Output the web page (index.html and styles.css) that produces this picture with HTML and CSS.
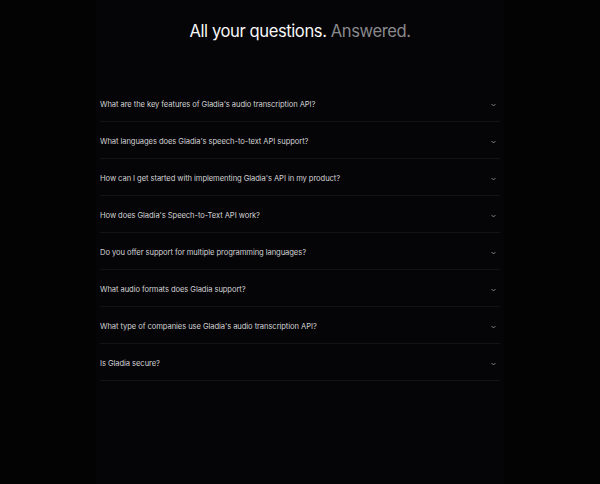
FILE: index.html
```html
<!DOCTYPE html>
<html lang="en">
<head>
    <meta charset="UTF-8">
    <meta name="viewport" content="width=device-width, initial-scale=1.0">
    <title>FAQ - Gladia</title>
    <link rel="stylesheet" href="styles.css">
</head>
<body>
    <main class="faq-section">
        <h2 class="faq-title">All your questions. <span class="muted">Answered.</span></h2>

        <ul class="faq-list">
            <li class="faq-item">
                <span class="question">What are the key features of Gladia's audio transcription API?</span>
                <svg class="chevron" viewBox="0 0 8 5"><path d="M1 1l3 3 3-3"/></svg>
            </li>
            <li class="faq-item">
                <span class="question">What languages does Gladia's speech-to-text API support?</span>
                <svg class="chevron" viewBox="0 0 8 5"><path d="M1 1l3 3 3-3"/></svg>
            </li>
            <li class="faq-item">
                <span class="question">How can I get started with implementing Gladia's API in my product?</span>
                <svg class="chevron" viewBox="0 0 8 5"><path d="M1 1l3 3 3-3"/></svg>
            </li>
            <li class="faq-item">
                <span class="question">How does Gladia's Speech-to-Text API work?</span>
                <svg class="chevron" viewBox="0 0 8 5"><path d="M1 1l3 3 3-3"/></svg>
            </li>
            <li class="faq-item">
                <span class="question">Do you offer support for multiple programming languages?</span>
                <svg class="chevron" viewBox="0 0 8 5"><path d="M1 1l3 3 3-3"/></svg>
            </li>
            <li class="faq-item">
                <span class="question">What audio formats does Gladia support?</span>
                <svg class="chevron" viewBox="0 0 8 5"><path d="M1 1l3 3 3-3"/></svg>
            </li>
            <li class="faq-item">
                <span class="question">What type of companies use Gladia's audio transcription API?</span>
                <svg class="chevron" viewBox="0 0 8 5"><path d="M1 1l3 3 3-3"/></svg>
            </li>
            <li class="faq-item">
                <span class="question">Is Gladia secure?</span>
                <svg class="chevron" viewBox="0 0 8 5"><path d="M1 1l3 3 3-3"/></svg>
            </li>
        </ul>
    </main>
</body>
</html>
```

FILE: styles.css
```css
* {
    margin: 0;
    padding: 0;
    box-sizing: border-box;
}

body {
    font-family: Inter, "Noto Sans", sans-serif;
    background: #030303;
    min-height: 100vh;
    color: #fff;
}

.faq-section {
    width: 408px;
    min-height: 484px;
    margin: 0 auto;
    padding: 21px 4px 0;
    background: #050407;
}

.faq-title {
    text-align: center;
    font-size: 16.6px;
    font-weight: 400;
    line-height: 21px;
    letter-spacing: -0.025em;
    color: #f6f6f6;
    margin: 0 -100px 43px;
}

.faq-title .muted {
    color: #89898b;
}

.faq-list {
    list-style: none;
}

.faq-item {
    height: 37px;
    display: flex;
    align-items: center;
    justify-content: space-between;
    padding-top: 3px;
    border-bottom: 1px solid #131215;
}

.question {
    font-size: 7.6px;
    color: #d2d2d4;
    letter-spacing: -0.01em;
}

.chevron {
    width: 5px;
    height: 4px;
    margin-right: 4px;
    fill: none;
    stroke: #a0a0a2;
    stroke-width: 1.3;
}
```
